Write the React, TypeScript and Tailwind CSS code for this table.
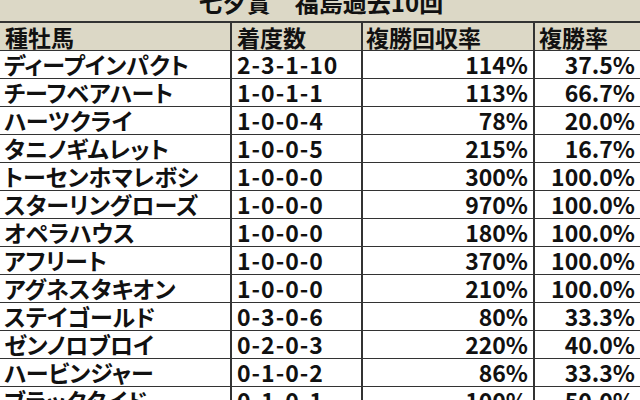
import React from "react";

const rows: [string, string, string, string][] = [
  ["ディープインパクト", "2-3-1-10", "114%", "37.5%"],
  ["チーフベアハート", "1-0-1-1", "113%", "66.7%"],
  ["ハーツクライ", "1-0-0-4", "78%", "20.0%"],
  ["タニノギムレット", "1-0-0-5", "215%", "16.7%"],
  ["トーセンホマレボシ", "1-0-0-0", "300%", "100.0%"],
  ["スターリングローズ", "1-0-0-0", "970%", "100.0%"],
  ["オペラハウス", "1-0-0-0", "180%", "100.0%"],
  ["アフリート", "1-0-0-0", "370%", "100.0%"],
  ["アグネスタキオン", "1-0-0-0", "210%", "100.0%"],
  ["ステイゴールド", "0-3-0-6", "80%", "33.3%"],
  ["ゼンノロブロイ", "0-2-0-3", "220%", "40.0%"],
  ["ハービンジャー", "0-1-0-2", "86%", "33.3%"],
  ["ブラックタイド", "0-1-0-1", "100%", "50.0%"],
];

const font = {
  fontFamily: '"Noto Sans CJK JP", "Noto Sans", sans-serif',
};

export default function App() {
  return (
    <div className="w-[640px] h-[400px] overflow-hidden bg-white text-[#111]" style={font}>
      <div className="h-[23px] bg-[#dcd8c6] border-b-2 border-[#333] overflow-hidden flex justify-center">
        <div className="text-[24px] leading-[24px] font-bold -mt-[10px] whitespace-pre pl-[2px]">七夕賞　福島過去10回</div>
      </div>
      <div className="grid grid-cols-[230px_131px_172px_107px] h-[28px] bg-[#dcd8c6] border-b border-[#333] text-[23px] leading-[27px] font-bold">
        <div className="pl-[5px] pt-[1px]">種牡馬</div>
        <div className="pl-[5px] pt-[1px] border-l-2 border-[#333]">着度数</div>
        <div className="pl-[3px] pt-[1px] border-l-2 border-[#333]">複勝回収率</div>
        <div className="pl-[4px] pt-[1px] border-l-2 border-[#333]">複勝率</div>
      </div>
      {rows.map((r, i) => (
        <div
          key={i}
          className="grid grid-cols-[230px_131px_172px_107px] h-[28px] border-b border-[#333] leading-[27px] font-bold"
        >
          <div className="pl-[4px] whitespace-nowrap text-[23px] [font-feature-settings:'palt']">{r[0]}</div>
          <div className="pl-[5px] border-l-2 border-[#333] text-[23px] tracking-[1px]">{r[1]}</div>
          <div className="pr-[5px] text-right border-l-2 border-[#333] text-[23px]">{r[2]}</div>
          <div className="pr-[5px] text-right border-l-2 border-[#333] text-[23px]">{r[3]}</div>
        </div>
      ))}
    </div>
  );
}
